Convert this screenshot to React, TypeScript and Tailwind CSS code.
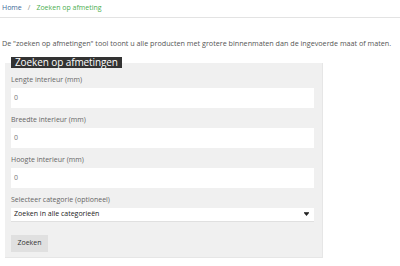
import React from "react";

function Field({ label }: { label: string }) {
  return (
    <div className="flex flex-col">
      <div className="h-[12px] leading-[12px] text-[7px] text-[#666] mb-[2px]">{label}</div>
      <div className="h-[20px] bg-white flex items-center pl-[3px] text-[7px] text-[#777]">0</div>
    </div>
  );
}

export default function App() {
  return (
    <div className="w-[400px] h-[266px] bg-white overflow-hidden" style={{ fontFamily: '"Open Sans", "Noto Sans", sans-serif' }}>
      <div className="h-[18px] flex items-center pl-[2px] text-[7px] gap-[6px] border-b border-[#e3e3e3]">
        <span className="text-[#3d6b98]">Home</span>
        <span className="text-[#888]">/</span>
        <span className="text-[#4caf50]">Zoeken op afmeting</span>
      </div>
      <p className="mt-[20px] pl-[2px] text-[7.2px] leading-[10px] text-[#555] whitespace-nowrap">
        De "zoeken op afmetingen" tool toont u alle producten met grotere binnenmaten dan de ingevoerde maat of maten.
      </p>
      <div className="relative mt-[15px] ml-[5px] w-[318px] h-[195px] bg-[#f0f0f0] border-r border-b border-[#e6e6e6]">
        <div className="absolute left-[6px] top-[-6px] h-[11px] px-[4px] bg-[#333] text-white text-[10px] leading-[11px] tracking-[-0.1px]">
          Zoeken op afmetingen
        </div>
        <div className="flex flex-col gap-[6px] pl-[6px] pr-[8px] pt-[11px]">
          <Field label="Lengte interieur (mm)" />
          <Field label="Breedte interieur (mm)" />
          <Field label="Hoogte interieur (mm)" />
          <div className="flex flex-col">
            <div className="h-[12px] leading-[12px] text-[7px] text-[#666] mb-[2px]">Selecteer categorie (optioneel)</div>
            <div className="h-[14px] bg-white flex items-center justify-between pl-[3px] pr-[5px] text-[7px] text-[#222] border-b border-[#e0e0e0]">
              <span>Zoeken in alle categorieën</span>
              <svg width="5" height="5" viewBox="0 0 5 5"><path d="M0 1h5L2.5 4z" fill="#222" /><rect x="0" y="0" width="5" height="0.8" fill="#222" /></svg>
            </div>
          </div>
          <div className="mt-[7px]">
            <button className="h-[17px] w-[37px] bg-[#e0e0e0] text-[7px] text-[#333] flex items-center justify-center">Zoeken</button>
          </div>
        </div>
      </div>
    </div>
  );
}
